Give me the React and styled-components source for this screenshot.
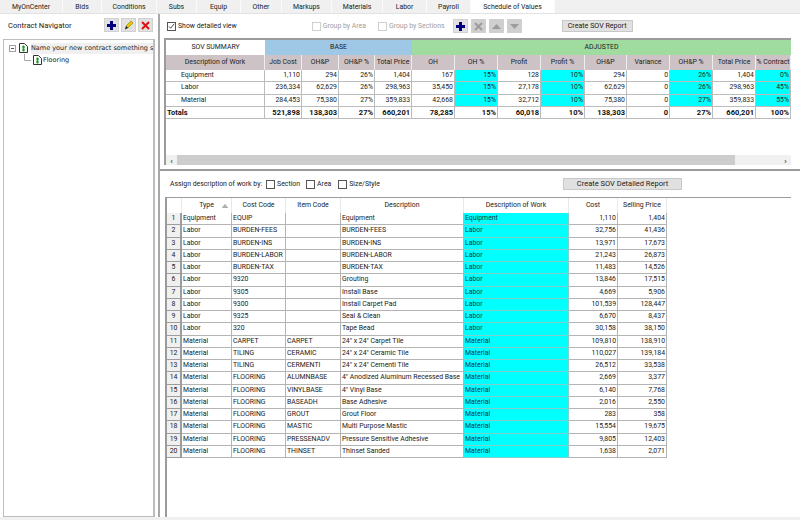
import React from "react";
import styled, { createGlobalStyle } from "styled-components";

const GlobalStyle = createGlobalStyle`
  html, body { margin: 0; padding: 0; background: #fff; }
  body { font-family: Roboto, "Liberation Sans", Arial, sans-serif; font-size: 6.9px; color: #222; }
`;

const tabs = [
  ["MyOnCenter", 63], ["Bids", 39], ["Conditions", 55], ["Subs", 40], ["Equip", 44], ["Other", 41],
  ["Markups", 50], ["Materials", 51], ["Labor", 44], ["Payroll", 44], ["Schedule of Values", 84],
];

const summaryCols = "99px 37px 37px 36px 37px 43px 43px 43px 44px 42px 43px 43px 43px 35px";
const summaryHeads = ["Description of Work", "Job Cost", "OH&P", "OH&P %", "Total Price", "OH", "OH %", "Profit", "Profit %", "OH&P", "Variance", "OH&P %", "Total Price", "% Contract"];
const summaryRows = [
  ["Equipment", "1,110", "294", "26%", "1,404", "167", "15%", "128", "10%", "294", "0", "26%", "1,404", "0%"],
  ["Labor", "236,334", "62,629", "26%", "298,963", "35,450", "15%", "27,178", "10%", "62,629", "0", "26%", "298,963", "45%"],
  ["Material", "284,453", "75,380", "27%", "359,833", "42,668", "15%", "32,712", "10%", "75,380", "0", "27%", "359,833", "55%"],
];
const totals = ["Totals", "521,898", "138,303", "27%", "660,201", "78,285", "15%", "60,018", "10%", "138,303", "0", "27%", "660,201", "100%"];
const cyanCols = [6, 8, 11, 13];

const detailCols = "15px 50px 54px 55px 123px 105px 49px 49px";
const detailRows = [
  ["Equipment", "EQUIP", "", "Equipment", "Equipment", "1,110", "1,404"],
  ["Labor", "BURDEN-FEES", "", "BURDEN-FEES", "Labor", "32,756", "41,436"],
  ["Labor", "BURDEN-INS", "", "BURDEN-INS", "Labor", "13,971", "17,673"],
  ["Labor", "BURDEN-LABOR", "", "BURDEN-LABOR", "Labor", "21,243", "26,873"],
  ["Labor", "BURDEN-TAX", "", "BURDEN-TAX", "Labor", "11,483", "14,526"],
  ["Labor", "9320", "", "Grouting", "Labor", "13,846", "17,515"],
  ["Labor", "9305", "", "Install Base", "Labor", "4,669", "5,906"],
  ["Labor", "9300", "", "Install Carpet Pad", "Labor", "101,539", "128,447"],
  ["Labor", "9325", "", "Seal & Clean", "Labor", "6,670", "8,437"],
  ["Labor", "320", "", "Tape Bead", "Labor", "30,158", "38,150"],
  ["Material", "CARPET", "CARPET", "24\" x 24\" Carpet Tile", "Material", "109,810", "138,910"],
  ["Material", "TILING", "CERAMIC", "24\" x 24\" Ceramic Tile", "Material", "110,027", "139,184"],
  ["Material", "TILING", "CERMENTI", "24\" x 24\" Cementi Tile", "Material", "26,512", "33,538"],
  ["Material", "FLOORING", "ALUMNBASE", "4\" Anodized Aluminum Recessed Base", "Material", "2,669", "3,377"],
  ["Material", "FLOORING", "VINYLBASE", "4\" Vinyl Base", "Material", "6,140", "7,768"],
  ["Material", "FLOORING", "BASEADH", "Base Adhesive", "Material", "2,016", "2,550"],
  ["Material", "FLOORING", "GROUT", "Grout Floor", "Material", "283", "358"],
  ["Material", "FLOORING", "MASTIC", "Multi Purpose Mastic", "Material", "15,554", "19,675"],
  ["Material", "FLOORING", "PRESSENADV", "Pressure Sensitive Adhesive", "Material", "9,805", "12,403"],
  ["Material", "FLOORING", "THINSET", "Thinset Sanded", "Material", "1,638", "2,071"],
];

const Page = styled.div`
  width: 800px;
  height: 520px;
  overflow: hidden;
  display: flex;
  flex-direction: column;
  background: #fff;
`;

const TabBar = styled.div`
  height: 13px;
  display: flex;
  flex: none;
  background: #f0f0f0;
  border-bottom: 1px solid #e2e2e2;
`;

const Tab = styled.div`
  width: ${(p) => p.$w}px;
  box-sizing: border-box;
  text-align: center;
  line-height: 14px;
  border-right: 1px solid #fafafa;
  background: ${(p) => (p.$active ? "#fff" : "#f0f0f0")};
  color: #222;
`;

const Body = styled.div`
  flex: 1;
  display: flex;
  min-height: 0;
`;

const StatusStrip = styled.div`
  height: 3px;
  flex: none;
  background: #f0f0f0;
`;

const Navigator = styled.div`
  width: 155px;
  flex: none;
  box-sizing: border-box;
  padding: 4px 0 0 3px;
  display: flex;
  flex-direction: column;
`;

const NavHead = styled.div`
  height: 21px;
  display: flex;
  align-items: center;
  gap: 1px;
  padding: 0 1px 7px 5px;
  box-sizing: border-box;
  font-size: 7.6px;
  color: #222;
`;

const NavTitle = styled.span`
  flex: 1;
`;

const IconButton = styled.div`
  width: 15px;
  height: 14px;
  box-sizing: border-box;
  margin-right: 1px;
  display: flex;
  align-items: center;
  justify-content: center;
  background: ${(p) => (p.$off ? "#cfcfcf" : "#e1e1e1")};
  border: 1px solid #d0d0d0;
`;

const TreeBox = styled.div`
  flex: 1;
  padding: 2px 0 0 5px;
  border: 1px solid #bdbdbd;
  border-width: 1px 2px 1px 1px;
  overflow: hidden;
  font-family: "DejaVu Sans", sans-serif;
  font-size: 6.5px;
  color: #222;
`;

const TreeRow = styled.div`
  height: 12px;
  display: flex;
  align-items: center;
  gap: ${(p) => p.$gap}px;
  white-space: nowrap;
  padding-left: ${(p) => p.$indent || 0}px;
`;

const TreeLabel = styled.span`
  flex: 1;
  background: ${(p) => (p.$selected ? "#f0f0f0" : "transparent")};
  line-height: 11px;
`;

const Work = styled.div`
  flex: 1;
  min-width: 0;
  display: flex;
  flex-direction: column;
  border-left: 2px solid #a8a8a8;
  margin-left: 3px;
`;

const TopPane = styled.div`
  height: 157px;
  flex: none;
  box-sizing: border-box;
  padding: 0 9px 4px 4px;
  border-bottom: 2px solid #9a9a9a;
  display: flex;
  flex-direction: column;
`;

const Toolbar = styled.div`
  height: 24px;
  flex: none;
  display: flex;
  align-items: center;
  padding-left: 3px;
  color: #222;
`;

const CheckLabel = styled.label`
  display: flex;
  align-items: center;
  gap: 2px;
  margin-left: ${(p) => p.$gap || 0}px;
  color: ${(p) => (p.$off ? "#a0a0a0" : "#222")};
`;

const Box = styled.span`
  width: 9px;
  height: 9px;
  box-sizing: border-box;
  border: 1px solid ${(p) => (p.$off ? "#cfcfcf" : "#555")};
  display: flex;
  align-items: center;
  justify-content: center;
  background: #fff;
`;

const Button = styled.div`
  margin-left: ${(p) => (p.$gap ? `${p.$gap}px` : "auto")};
  margin-right: ${(p) => p.$right || 0}px;
  width: ${(p) => p.$w}px;
  height: 12px;
  box-sizing: border-box;
  line-height: 10px;
  text-align: center;
  white-space: nowrap;
  background: #e1e1e1;
  border: 1px solid #c8c8c8;
  color: #222;
  font-size: ${(p) => p.$size || 7.1}px;
`;

const SmallGroup = styled.div`
  display: flex;
  gap: 2px;
  margin-left: 8px;
`;

const Summary = styled.div`
  flex: 1;
  min-height: 0;
  border: solid #9b9b9b;
  border-width: 2px 0 0 2px;
  display: flex;
  flex-direction: column;
`;

const BandRow = styled.div`
  height: 15px;
  display: flex;
  flex: none;
`;

const Band = styled.div`
  width: ${(p) => p.$w}px;
  background: ${(p) => p.$bg};
  text-align: center;
  line-height: 15px;
  color: #222;
  flex: none;
`;

const GridRow = styled.div`
  display: grid;
  grid-template-columns: ${(p) => p.$cols};
  height: ${(p) => p.$h}px;
  flex: none;
`;

const HeadCell = styled.div`
  background: #cdc3c6;
  border-right: 1px solid #eee;
  text-align: center;
  line-height: 15px;
  white-space: nowrap;
  overflow: hidden;
  color: #222;
`;

const Cell = styled.div`
  box-sizing: border-box;
  padding: 0 ${(p) => (p.$label ? 0 : 1)}px 0 ${(p) => (p.$label ? 15 : 1)}px;
  text-align: ${(p) => (p.$label ? "left" : "right")};
  line-height: 11px;
  white-space: nowrap;
  overflow: hidden;
  background: ${(p) => (p.$cyan ? "#00ffff" : "#fff")};
  border: solid #bcbcbc;
  border-width: 0 1px 1px 0;
  color: #222;
`;

const TotalCell = styled.div`
  box-sizing: border-box;
  padding: 0 1px;
  text-align: ${(p) => (p.$label ? "left" : "right")};
  font-size: 7.5px;
  line-height: 11px;
  font-weight: bold;
  white-space: nowrap;
  overflow: hidden;
  border: solid #bcbcbc;
  border-width: 0 1px 1px 0;
  color: #111;
`;

const Spacer = styled.div`
  flex: 1;
`;

const ScrollBar = styled.div`
  height: 10px;
  flex: none;
  display: flex;
  align-items: center;
  background: #f0f0f0;
  color: #444;
  font-size: 8px;
`;

const ScrollThumb = styled.div`
  flex: 1;
  height: 100%;
  margin-right: 45px;
  background: #cdcdcd;
`;

const Arrow = styled.span`
  width: 11px;
  line-height: 9px;
  text-align: center;
  flex: none;
  font-weight: bold;
`;

const BottomPane = styled.div`
  flex: 1;
  min-height: 0;
  padding: 0 9px 0 5px;
  display: flex;
  flex-direction: column;
`;

const AssignBar = styled.div`
  height: 26px;
  flex: none;
  display: flex;
  align-items: center;
  padding-left: 5px;
  color: #222;
`;

const Detail = styled.div`
  flex: 1;
  border: solid #9b9b9b;
  border-width: 1px 0 0 2px;
`;

const DetailHead = styled.div`
  background: #fff;
  border-right: 1px solid #e8e8e8;
  text-align: center;
  line-height: 15px;
  color: #222;
  position: relative;
`;

const SortMark = styled.svg`
  position: absolute;
  right: 3px;
  top: 6px;
`;

const NumCell = styled.div`
  background: #f0f0f0;
  border: solid #9d9d9d;
  border-width: 0 2px 1px 0;
  text-align: center;
  line-height: 11px;
  color: #222;
`;

const DetailCell = styled.div`
  box-sizing: border-box;
  padding: 0 1px;
  text-align: ${(p) => (p.$right ? "right" : "left")};
  line-height: 11px;
  white-space: nowrap;
  overflow: hidden;
  background: ${(p) => (p.$cyan ? "#00ffff" : "#fff")};
  border: solid ${(p) => (p.$cyan ? "#7fcfcf" : "#b4b4b4")};
  border-width: 0 1px 1px 0;
  color: ${(p) => (p.$cyan ? "#063a44" : "#222")};
`;

const Plus = ({ color = "#00007f" }) => (
  <svg width="11" height="11" viewBox="0 0 11 11"><path d="M4 1h3v3h3v3H7v3H4V7H1V4h3z" fill={color} /></svg>
);

const Pencil = () => (
  <svg width="11" height="11" viewBox="0 0 11 11">
    <path d="M8 1l2 2-5 5-2-2z" fill="#e6c800" stroke="#7a6a00" strokeWidth=".5" />
    <path d="M3 6l2 2-3 1.5z" fill="#111" />
  </svg>
);

const Cross = ({ color = "#e01010", width = 2 }) => (
  <svg width="11" height="11" viewBox="0 0 11 11"><path d="M2 2l7 7M9 2l-7 7" stroke={color} strokeWidth={width} /></svg>
);

const Tri = ({ down }) => (
  <svg width="11" height="7" viewBox="0 0 11 7"><path d={down ? "M1 1h9L5.5 6z" : "M1 6h9L5.5 1z"} fill="#9c9c9c" /></svg>
);

const Check = () => (
  <svg width="7" height="7" viewBox="0 0 8 8"><path d="M1 4l2 2 4-5" fill="none" stroke="#333" strokeWidth="1" /></svg>
);

const DocIcon = () => (
  <svg width="9" height="10" viewBox="0 0 9 10" style={{ flex: "none" }}>
    <path d="M.5.5h5l3 3v6h-8z" fill="#fff" stroke="#333" />
    <path d="M4.5 2.5v6" stroke="#1d9a2c" strokeWidth="1.6" />
    <path d="M3 4h3M3 7h3" stroke="#1d9a2c" />
  </svg>
);

const Expander = () => (
  <svg width="7" height="7" viewBox="0 0 7 7" style={{ flex: "none" }}>
    <rect x=".5" y=".5" width="6" height="6" fill="#fff" stroke="#a0a0a0" />
    <path d="M2 3.5h3" stroke="#555" />
  </svg>
);

const Elbow = () => (
  <svg width="7" height="12" viewBox="0 0 7 12" style={{ flex: "none" }}>
    <path d="M.5 0v6.5h6.5" fill="none" stroke="#a8a8a8" />
  </svg>
);

const Option = ({ label, checked, off, gap }) => (
  <CheckLabel $off={off} $gap={gap}>
    <Box $off={off}>{checked && <Check />}</Box>
    {label}
  </CheckLabel>
);

export default function App() {
  return (
    <Page>
      <GlobalStyle />
      <TabBar>
        {tabs.map(([name, w]) => (
          <Tab key={name} $w={w} $active={name === "Schedule of Values"}>{name}</Tab>
        ))}
      </TabBar>
      <Body>
        <Navigator>
          <NavHead>
            <NavTitle>Contract Navigator</NavTitle>
            <IconButton><Plus /></IconButton>
            <IconButton><Pencil /></IconButton>
            <IconButton><Cross /></IconButton>
          </NavHead>
          <TreeBox>
            <TreeRow $gap={3}>
              <Expander />
              <DocIcon />
              <TreeLabel $selected>Name your new contract something s</TreeLabel>
            </TreeRow>
            <TreeRow $gap={1.5} $indent={15}>
              <Elbow />
              <DocIcon />
              <TreeLabel>Flooring</TreeLabel>
            </TreeRow>
          </TreeBox>
        </Navigator>
        <Work>
          <TopPane>
            <Toolbar>
              <Option label="Show detailed view" checked />
              <Option label="Group by Area" off gap={75} />
              <Option label="Group by Sections" off gap={12} />
              <SmallGroup>
                <IconButton><Plus /></IconButton>
                <IconButton $off><Cross color="#9c9c9c" /></IconButton>
                <IconButton $off><Tri /></IconButton>
                <IconButton $off><Tri down /></IconButton>
              </SmallGroup>
              <Button $w={71} $gap={39}>Create SOV Report</Button>
            </Toolbar>
            <Summary>
              <BandRow>
                <Band $w={99} $bg="#fff">SOV SUMMARY</Band>
                <Band $w={147} $bg="#9fc8e6">BASE</Band>
                <Band $w={379} $bg="#a0dca0">ADJUSTED</Band>
              </BandRow>
              <GridRow $cols={summaryCols} $h={15}>
                {summaryHeads.map((h, i) => <HeadCell key={i}>{h}</HeadCell>)}
              </GridRow>
              {summaryRows.map((row) => (
                <GridRow key={row[0]} $cols={summaryCols} $h={12.3}>
                  {row.map((v, i) => (
                    <Cell key={i} $label={i === 0} $cyan={cyanCols.includes(i)}>{v}</Cell>
                  ))}
                </GridRow>
              ))}
              <GridRow $cols={summaryCols} $h={12}>
                {totals.map((v, i) => <TotalCell key={i} $label={i === 0}>{v}</TotalCell>)}
              </GridRow>
              <Spacer />
              <ScrollBar>
                <Arrow>‹</Arrow>
                <ScrollThumb />
                <Arrow>›</Arrow>
              </ScrollBar>
            </Summary>
          </TopPane>
          <BottomPane>
            <AssignBar>
              Assign description of work by:
              <Option label="Section" gap={4} />
              <Option label="Area" gap={6} />
              <Option label="Size/Style" gap={7} />
              <Button $w={119} $right={109} $size={7.5}>Create SOV Detailed Report</Button>
            </AssignBar>
            <Detail>
              <GridRow $cols={detailCols} $h={15}>
                <DetailHead />
                <DetailHead>
                  Type
                  <SortMark width="6" height="4" viewBox="0 0 6 4"><path d="M.5 3.5h5L3 .5z" fill="#bbb" stroke="#777" strokeWidth=".5" /></SortMark>
                </DetailHead>
                <DetailHead>Cost Code</DetailHead>
                <DetailHead>Item Code</DetailHead>
                <DetailHead>Description</DetailHead>
                <DetailHead>Description of Work</DetailHead>
                <DetailHead>Cost</DetailHead>
                <DetailHead>Selling Price</DetailHead>
              </GridRow>
              {detailRows.map((row, idx) => (
                <GridRow key={idx} $cols={detailCols} $h={12.25}>
                  <NumCell>{idx + 1}</NumCell>
                  {row.map((v, i) => (
                    <DetailCell key={i} $cyan={i === 4} $right={i > 4}>{v}</DetailCell>
                  ))}
                </GridRow>
              ))}
            </Detail>
          </BottomPane>
        </Work>
      </Body>
      <StatusStrip />
    </Page>
  );
}
